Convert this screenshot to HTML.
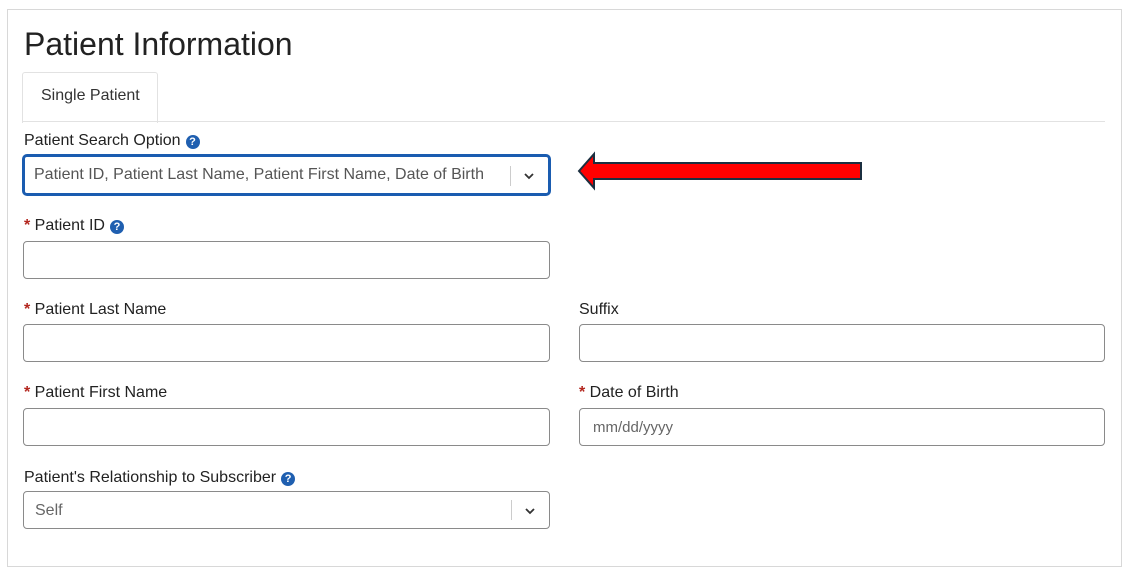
<html><head><style>
body{margin:0;width:1132px;height:575px;background:#fff;font-family:"Liberation Sans",sans-serif;position:relative;overflow:hidden}
.a{position:absolute}
.lbl{font-size:16px;color:#222}
.req{color:#b3261e;font-weight:bold}
.in{position:absolute;border:1px solid #8a8a8a;border-radius:4px;height:36px;background:#fff;box-sizing:border-box}
.q{display:inline-block;width:14px;height:14px;border-radius:50%;background:#1f5fb0;color:#fff;font-size:11px;font-weight:bold;text-align:center;line-height:14px;vertical-align:0px;margin-left:5px}
.ph{position:absolute;left:11px;top:9px;font-size:16px;color:#666}
.dd{position:absolute;right:37px;top:8px;width:1px;height:20px;background:#ccc}
</style></head><body>
<div class="a" style="left:7px;top:9px;width:1113px;height:556px;border:1px solid #d8d8d8"></div>
<div class="a" style="left:24px;top:26px;font-size:32px;color:#222">Patient Information</div>
<div class="a" style="left:22px;top:72px;width:134px;height:50px;border:1px solid #e2e2e2;border-bottom:none;border-radius:3px 3px 0 0"></div>
<div class="a" style="left:41px;top:87px;font-size:16px;color:#333">Single Patient</div>
<div class="a" style="left:22px;top:121px;width:1083px;height:1px;background:#e2e2e2"></div>
<div class="a lbl" style="left:24px;top:132px">Patient Search Option<span class="q">?</span></div>
<div class="in" style="left:22px;top:154px;width:529px;height:42px;border:3px solid #1a5cb0;border-radius:5px">
<div class="ph" style="left:9px;top:9px;color:#555">Patient ID, Patient Last Name, Patient First Name, Date of Birth</div>
<div class="dd" style="right:37px;top:9px"></div>
<svg class="a" style="right:13px;top:14px" width="12" height="10"><path d="M2 3l4 4 4-4" stroke="#333" stroke-width="1.8" fill="none"/></svg></div>
<svg class="a" style="left:576px;top:151px" width="290" height="40"><path d="M3 20L18 3V12H285V28H18V37Z" fill="#f00" stroke="#1b2f40" stroke-width="2"/></svg>
<div class="a lbl" style="left:24px;top:217px"><span class="req">*</span> Patient ID<span class="q">?</span></div>
<div class="in" style="left:23px;top:241px;width:527px;height:38px"></div>
<div class="a lbl" style="left:24px;top:301px"><span class="req">*</span> Patient Last Name</div>
<div class="in" style="left:23px;top:324px;width:527px;height:38px"></div>
<div class="a lbl" style="left:579px;top:301px">Suffix</div>
<div class="in" style="left:579px;top:324px;width:526px;height:38px"></div>
<div class="a lbl" style="left:24px;top:384px"><span class="req">*</span> Patient First Name</div>
<div class="in" style="left:23px;top:408px;width:527px;height:38px"></div>
<div class="a lbl" style="left:579px;top:384px"><span class="req">*</span> Date of Birth</div>
<div class="in" style="left:579px;top:408px;width:526px;height:38px"><div class="ph" style="font-size:15px;top:10px;left:13px">mm/dd/yyyy</div></div>
<div class="a lbl" style="left:24px;top:469px">Patient's Relationship to Subscriber<span class="q">?</span></div>
<div class="in" style="left:23px;top:491px;width:527px;height:38px"><div class="ph" style="top:10px">Self</div><div class="dd"></div>
<svg class="a" style="right:13px;top:14px" width="12" height="10"><path d="M2 3l4 4 4-4" stroke="#333" stroke-width="1.8" fill="none"/></svg></div>
</body></html>
